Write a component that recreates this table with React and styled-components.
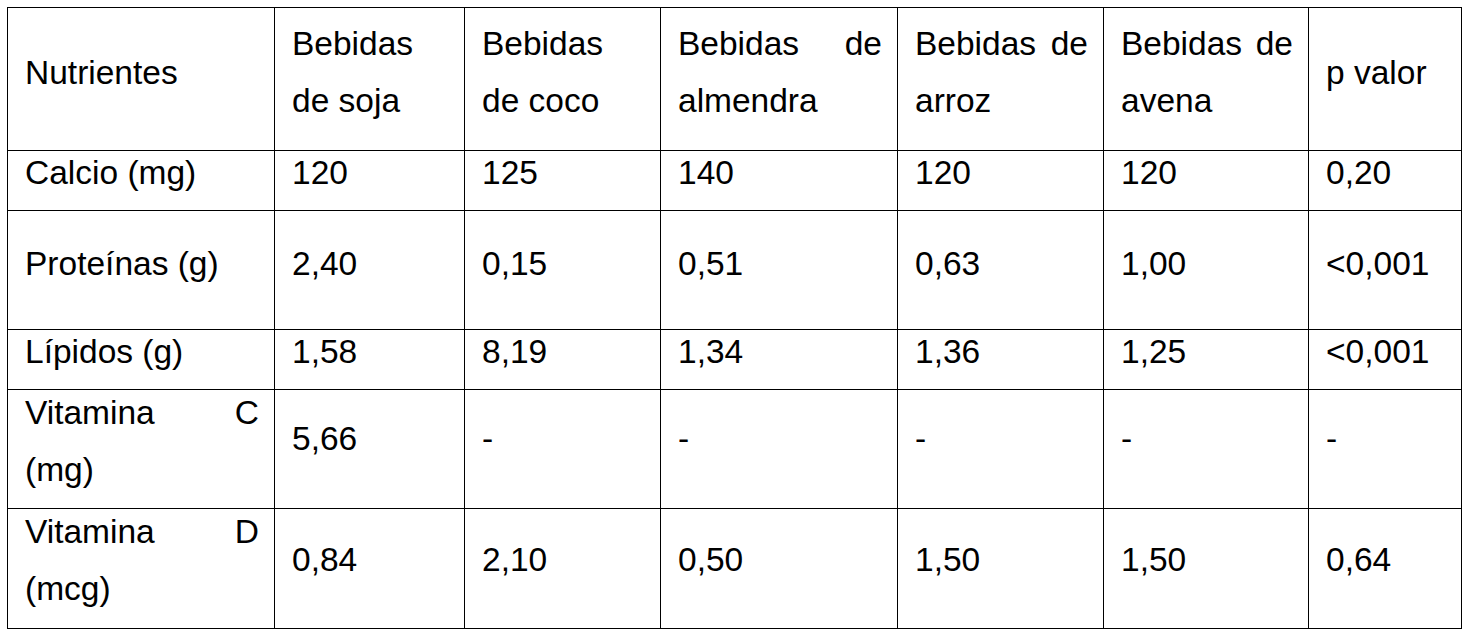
import styled, { createGlobalStyle } from 'styled-components'

const GlobalStyle = createGlobalStyle`
html, body {
    margin: 0;
    background: #fff;
}
body {
    font-family: "Liberation Sans", Arial, sans-serif;
    color: #000;
}
`

const Page = styled.div`
padding: 7px 0 0 7px;
`

const Table = styled.table`
border-collapse: separate;
border-spacing: 0;
table-layout: fixed;
width: 1455px;
border-top: 1px solid #000;
border-left: 1px solid #000;
font-size: 33.5px;
`

const Col = styled.col`
width: ${({ $w }) => $w}px;
`

const Row = styled.tr`
height: ${({ $h }) => $h}px;
`

const HeadCell = styled.th`
box-sizing: border-box;
border-right: 1px solid #000;
border-bottom: 1px solid #000;
padding: 7px 15px 21px 17px;
font-weight: normal;
text-align: justify;
vertical-align: middle;
line-height: 57px;
`

const Cell = styled.td`
box-sizing: border-box;
border-right: 1px solid #000;
border-bottom: 1px solid #000;
padding: ${({ $top }) => $top ? 3 : 0}px 15px ${({ $pb }) => $pb || 0}px 17px;
text-align: justify;
vertical-align: ${({ $top }) => $top ? 'top' : 'middle'};
line-height: ${({ $lh }) => $lh || 38}px;
`

const Lines = styled.div`
margin-top: -9px;
`

const columns = [
    { label: 'Nutrientes', w: 267 },
    { label: 'Bebidas de soja', w: 190 },
    { label: 'Bebidas de coco', w: 196 },
    { label: 'Bebidas de almendra', w: 237 },
    { label: 'Bebidas de arroz', w: 206 },
    { label: 'Bebidas de avena', w: 205 },
    { label: 'p valor', w: 153 },
]

const rows = [
    { name: 'Calcio (mg)', h: 60, values: ['120', '125', '140', '120', '120', '0,20'] },
    { name: 'Proteínas (g)', h: 119, pb: 12, values: ['2,40', '0,15', '0,51', '0,63', '1,00', '<0,001'] },
    { name: 'Lípidos (g)', h: 60, values: ['1,58', '8,19', '1,34', '1,36', '1,25', '<0,001'] },
    { name: 'Vitamina C (mg)', h: 119, pb: 20, wrap: true, values: ['5,66', '-', '-', '-', '-', '-'] },
    { name: 'Vitamina D (mcg)', h: 120, pb: 17, wrap: true, values: ['0,84', '2,10', '0,50', '1,50', '1,50', '0,64'] },
]

const App = () => {

    const body = rows.map(({ name, h, pb, wrap, values }) => {
        const tall = h > 100
        return (
            <Row key={name} $h={h}>
                {wrap
                    ? <Cell $top $lh={57}><Lines>{name}</Lines></Cell>
                    : <Cell $top={!tall} $pb={pb}>{name}</Cell>}
                {values.map((v, i) => (
                    <Cell key={i} $top={!tall} $pb={pb}>{v}</Cell>
                ))}
            </Row>
        )
    })

    return (
        <Page>
            <GlobalStyle />
            <Table>
                <colgroup>
                    {columns.map(({ label, w }) => <Col key={label} $w={w} />)}
                </colgroup>
                <thead>
                    <Row $h={143}>
                        {columns.map(({ label }) => <HeadCell key={label}>{label}</HeadCell>)}
                    </Row>
                </thead>
                <tbody>
                    {body}
                </tbody>
            </Table>
        </Page>
    )
}

export default App
